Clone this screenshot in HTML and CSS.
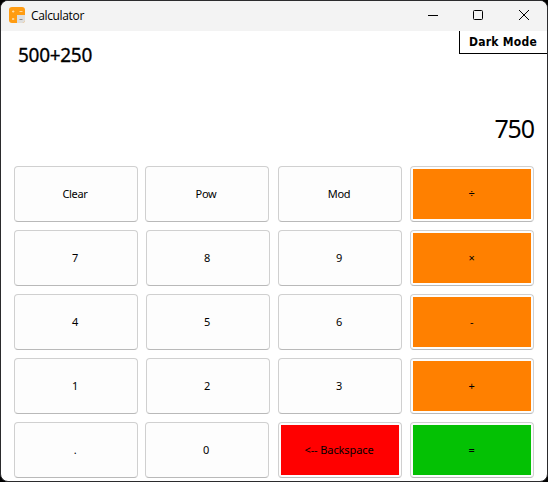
FILE: index.html
```html
<!DOCTYPE html>
<html lang="en">
<head>
<meta charset="utf-8">
<title>Calculator</title>
<link rel="stylesheet" href="styles.css">
</head>
<body>
<div class="window">
  <header class="titlebar">
    <svg class="app-icon" width="16" height="16" viewBox="0 0 16 16">
      <rect width="16" height="16" rx="3" fill="#ff9c12"/>
      <path d="M8 8h8v5a3 3 0 0 1-3 3H8z" fill="#dedede"/>
      <path d="M3 4.5h2.4M4.2 3.3v2.4M10.5 4.5h3M3.2 11l2 2M5.2 11l-2 2" stroke="#ffe0ae" stroke-width=".9" fill="none"/>
      <path d="M10.5 12.5h3" stroke="#8d8d8d"/>
    </svg>
    <span class="title">Calculator</span>
    <div class="controls">
      <svg width="46" height="30" viewBox="0 0 46 30"><path d="M18 14.5h10" stroke="#000"/></svg>
      <svg width="46" height="30" viewBox="0 0 46 30"><rect x="17.5" y="9.5" width="9" height="9" rx="1" fill="none" stroke="#000"/></svg>
      <svg width="46" height="30" viewBox="0 0 46 30"><path d="M17 9l10 10M27 9l-10 10" stroke="#000"/></svg>
    </div>
  </header>
  <main class="display">
    <div class="top-line">
      <div class="expression">500+250</div>
      <button class="mode">Dark Mode</button>
    </div>
    <div class="result">750</div>
  </main>
  <section class="keys">
    <div class="row wide"><button class="key">Clear</button><button class="key">Pow</button><button class="key">Mod</button><button class="key filled orange">÷</button></div>
    <div class="row"><button class="key">7</button><button class="key">8</button><button class="key">9</button><button class="key filled orange">×</button></div>
    <div class="row"><button class="key">4</button><button class="key">5</button><button class="key">6</button><button class="key filled orange">-</button></div>
    <div class="row"><button class="key">1</button><button class="key">2</button><button class="key">3</button><button class="key filled orange">+</button></div>
    <div class="row wide"><button class="key">.</button><button class="key">0</button><button class="key filled red"><span class="back">&lt;-- Backspace</span></button><button class="key filled green">=</button></div>
  </section>
</div>
</body>
</html>
```

FILE: styles.css
```css
* { box-sizing: border-box; }
body { margin: 0; background: #000; overflow: hidden; }
button { font: inherit; color: inherit; padding: 0; margin: 0; }
.window {
  width: 548px;
  height: 482px;
  border: 1px solid #2b2b2d;
  border-radius: 8px;
  overflow: hidden;
  background: #fff;
  color: #000;
  font-family: "Noto Sans", sans-serif;
}
.titlebar {
  display: flex;
  align-items: center;
  height: 30px;
  padding-left: 8px;
  background: #f3f3f3;
}
.app-icon { margin-top: -2px; }
.title {
  margin: 0 0 0 6px;
  font: 12px/16px "Open Sans", sans-serif;
  letter-spacing: -0.35px;
}
.controls { display: flex; margin: 0 -1px 0 auto; }
.display { height: 135px; }
.top-line { display: flex; justify-content: space-between; align-items: flex-start; }
.expression {
  padding: 12px 0 0 17px;
  font-size: 19px;
  line-height: 24px;
  letter-spacing: -0.3px;
  -webkit-text-stroke: 0.3px #000;
}
.mode {
  width: 88px;
  height: 23px;
  border: solid #000;
  border-width: 0 0 1px 1px;
  background: #fff;
  font: bold 12px/20px "DejaVu Sans Condensed", "DejaVu Sans", sans-serif;
  font-stretch: condensed;
  letter-spacing: 0.25px;
  padding-right: 1px;
}
.result {
  margin-top: 44px;
  padding-right: 13px;
  font-size: 25px;
  line-height: 34px;
  letter-spacing: -1.1px;
  text-align: right;
}
.keys { display: grid; gap: 8px; padding-left: 13px; }
.row { display: grid; grid-template-columns: repeat(4, 124px); gap: 8px; }
.row.wide { grid-template-columns: 123.5px 124.5px 124px 124px; }
.row.wide .key:nth-child(1) { width: 124px; }
.row.wide .key:nth-child(2) { width: 124px; margin-left: -0.5px; }
.key {
  height: 56px;
  padding: 2px 4px 2px 2px;
  border: 1px solid #d0d0d0;
  border-bottom-color: #b9b9b9;
  border-radius: 4px;
  background: #fdfdfd;
  font-size: 11px;
  line-height: 14px;
  letter-spacing: -0.3px;
}
.filled {
  padding: 2px;
  background: #fdfdfd linear-gradient(var(--fill), var(--fill)) center / calc(100% - 4px) calc(100% - 4px) no-repeat;
}
.filled:not(.red) { text-indent: -1px; }
.back { margin-left: -2px; letter-spacing: -0.1px; }
.orange { --fill: #ff8000; }
.red { --fill: #f00; }
.green { --fill: #04c104; }
```
